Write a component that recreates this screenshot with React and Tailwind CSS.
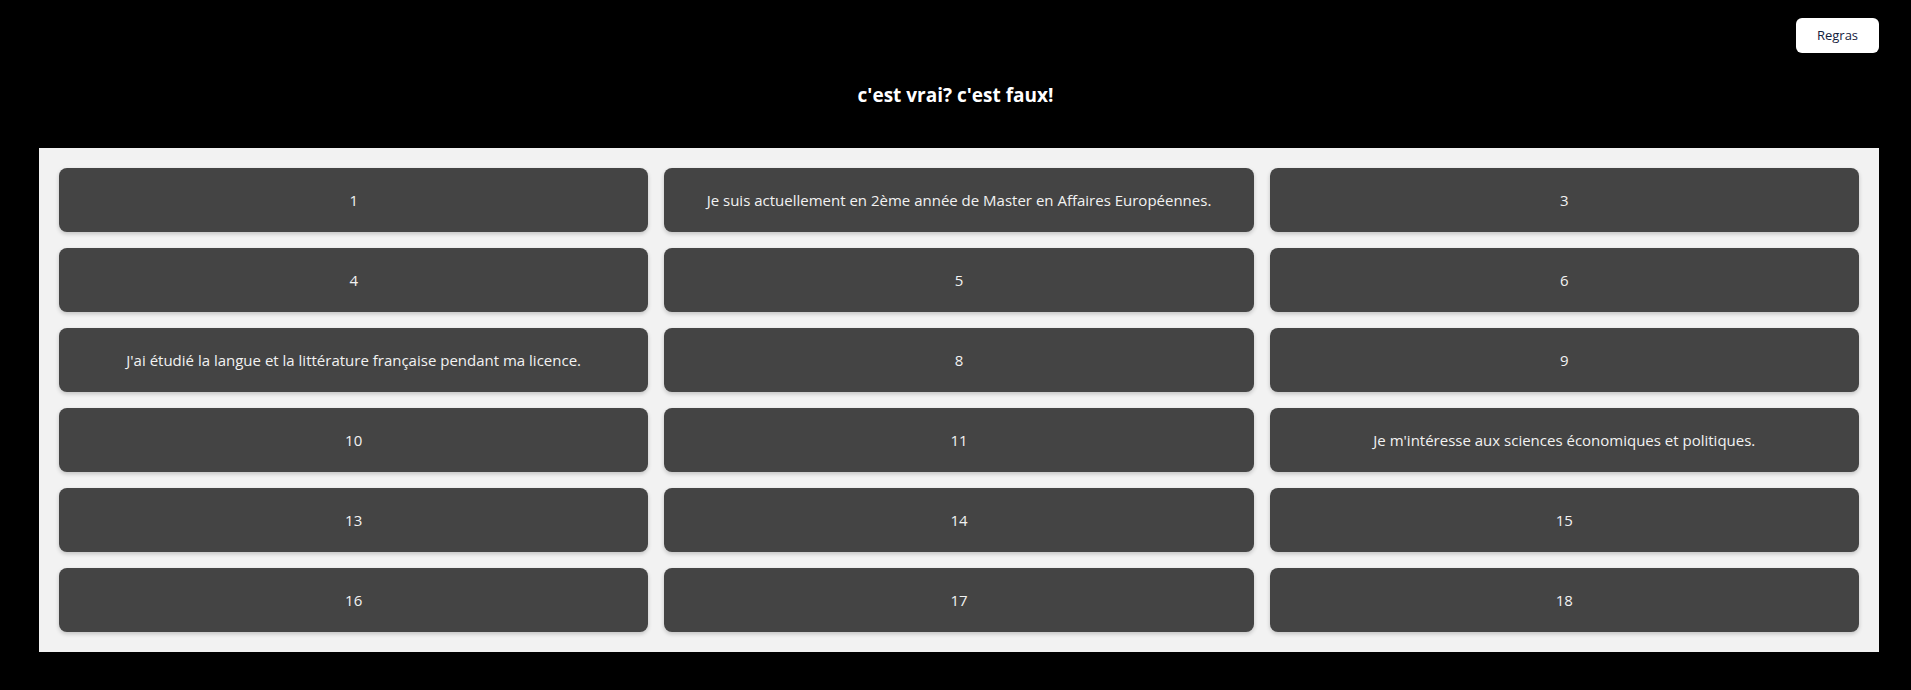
import React from "react";

const items = [
  "1",
  "Je suis actuellement en 2ème année de Master en Affaires Européennes.",
  "3",
  "4",
  "5",
  "6",
  "J'ai étudié la langue et la littérature française pendant ma licence.",
  "8",
  "9",
  "10",
  "11",
  "Je m'intéresse aux sciences économiques et politiques.",
  "13",
  "14",
  "15",
  "16",
  "17",
  "18",
];

export default function App() {
  return (
    <div
      className="min-h-[690px] bg-black"
      style={{ fontFamily: '"Open Sans", "Noto Sans", sans-serif' }}
    >
      <div className="flex justify-end pt-[18px] pr-[32px]">
        <button className="h-[35px] w-[83px] rounded-[6px] bg-white text-[13px] text-[#14213d]">
          Regras
        </button>
      </div>
      <h1 className="mt-[30px] text-center text-[19px] font-bold leading-[24px] text-white">
        c'est vrai? c'est faux!
      </h1>
      <div className="ml-[39px] mt-[41px] w-[1840px] bg-[#f2f2f2] p-[20px]">
        <div className="grid grid-cols-3 gap-[16px]">
          {items.map((t) => (
            <div
              key={t}
              className="flex h-[64px] items-center justify-center rounded-[8px] bg-[#444444] text-[15px] text-[#f2f2f2] shadow-[0_2px_4px_rgba(0,0,0,0.2)]"
            >
              {t}
            </div>
          ))}
        </div>
      </div>
    </div>
  );
}
